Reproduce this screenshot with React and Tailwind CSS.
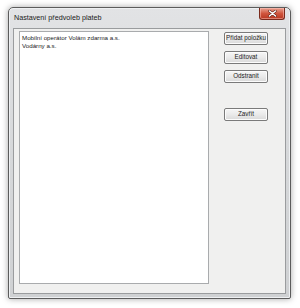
export default function App() {
  const btn =
    "h-[13px] w-[44px] flex items-center justify-center rounded-[2px] border border-[#7a7a7a] bg-gradient-to-b from-[#f6f6f6] via-[#eaeaea] to-[#d9d9d9] text-[6.3px] text-[#222] leading-none whitespace-nowrap shadow-[inset_0_0_0_1px_#fcfcfc]";
  return (
    <div className="w-[300px] h-[308px] bg-white pt-[7px] pl-[8px]" style={{ fontFamily: '"Liberation Sans", Arial, sans-serif' }}>
      <div className="w-[283px] h-[292px] flex flex-col rounded-t-[5px] rounded-b-[2px] border border-[#5c5c5c] bg-gradient-to-b from-[#e2e3e5] via-[#d6d8da] to-[#cfd1d3] shadow-[0_0_6px_rgba(0,0,0,0.35),inset_0_0_0_1px_#eef0f2]">
        <div className="h-[20px] flex items-start justify-between pl-[5px] pr-[5px]">
          <div className="pt-[6px] text-[7.2px] leading-none text-[#1a1a1a]">Nastavení předvoleb plateb</div>
          <div className="mt-[0px] w-[26px] h-[12px] flex items-center justify-center rounded-b-[3px] border border-t-0 border-[#7a2a1c] bg-gradient-to-b from-[#e8a090] via-[#d0553d] to-[#b8361f] shadow-[inset_0_0_0_1px_rgba(255,200,190,0.5)]">
            <svg width="9" height="7" viewBox="0 0 9 7">
              <path d="M1.5 1 L7.5 6 M7.5 1 L1.5 6" stroke="#5a1a10" strokeWidth="2.6" strokeLinecap="round" />
              <path d="M1.5 1 L7.5 6 M7.5 1 L1.5 6" stroke="#fff" strokeWidth="1.6" strokeLinecap="round" />
            </svg>
          </div>
        </div>
        <div className="mx-[4px] mb-[4px] flex-1 border border-[#9a9c9e] bg-[#f0f0ef]">
          <div className="flex pt-[2px] pl-[5px]">
            <div className="w-[190px] h-[253px] border border-[#a9abad] bg-white px-[2px] pt-[2px] text-[6.2px] leading-[7.5px] text-[#1a1a1a]">
              <div>Mobilní operátor Volám zdarma a.s.</div>
              <div>Vodárny a.s.</div>
            </div>
            <div className="ml-[15px] mt-[1px] flex flex-col">
              <div className={btn}>Přidat položku</div>
              <div className={btn + " mt-[6px]"}>Editovat</div>
              <div className={btn + " mt-[6px]"}>Odstranit</div>
              <div className={btn + " mt-[25px]"}>Zavřít</div>
            </div>
          </div>
        </div>
      </div>
    </div>
  );
}
